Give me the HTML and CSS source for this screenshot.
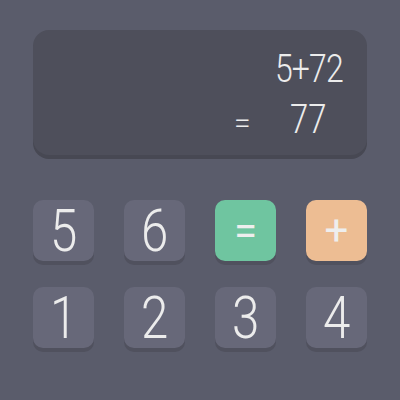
FILE: index.html
```html
<!DOCTYPE html>
<html>
<head>
<meta charset="utf-8">
<link rel="stylesheet" href="styles.css">
</head>
<body>
<div class="calc">
  <div class="display">
    <div class="expr"><span class="cond">5+72</span></div>
    <div class="result"><span class="eq">=</span><span class="cond">77</span></div>
  </div>
  <div class="keys">
    <div class="key"><span class="cond">5</span></div>
    <div class="key"><span class="cond">6</span></div>
    <div class="key key-eq"><span class="op">=</span></div>
    <div class="key key-plus"><span class="op">+</span></div>
    <div class="key"><span class="cond">1</span></div>
    <div class="key"><span class="cond">2</span></div>
    <div class="key"><span class="cond">3</span></div>
    <div class="key"><span class="cond">4</span></div>
  </div>
</div>
</body>
</html>
```
FILE: styles.css
```css
html, body {
  margin: 0;
  padding: 0;
  background: #5a5c6b;
  width: 400px;
  height: 400px;
  overflow: hidden;
}
.calc {
  padding: 30px 33px 0 33px;
  font-family: Roboto, "Liberation Sans", sans-serif;
  font-weight: 300;
  color: #ececec;
}
.display {
  height: 125px;
  box-sizing: border-box;
  background: #4e4f5b;
  border-radius: 16px;
  box-shadow: 0 4px 0 #474853;
  padding: 16px 24px 0 0;
  display: flex;
  flex-direction: column;
  align-items: flex-end;
}
.cond {
  display: inline-block;
  transform: scaleX(0.82);
  transform-origin: center;
}
.expr {
  font-size: 39px;
  line-height: 46px;
  letter-spacing: -1px;
}
.expr .cond {
  transform-origin: right center;
}
.result {
  display: flex;
  align-items: baseline;
  font-size: 40px;
  line-height: 50px;
  padding-right: 13px;
  margin-top: 3px;
}
.result .eq {
  font-size: 30px;
  margin-right: 35px;
}
.keys {
  margin-top: 45px;
  display: grid;
  grid-template-columns: repeat(4, 61px);
  justify-content: space-between;
  row-gap: 26px;
}
.key {
  height: 61px;
  border-radius: 10px;
  background: #676879;
  box-shadow: 0 4px 0 #50515e;
  display: flex;
  align-items: center;
  justify-content: center;
  font-size: 60px;
  line-height: 61px;
}
.key-eq {
  background: #6fc5a0;
}
.key-plus {
  background: #edbd93;
}
.op {
  font-size: 42px;
  font-weight: 400;
  line-height: 42px;
  color: #eeeeee;
}
```
